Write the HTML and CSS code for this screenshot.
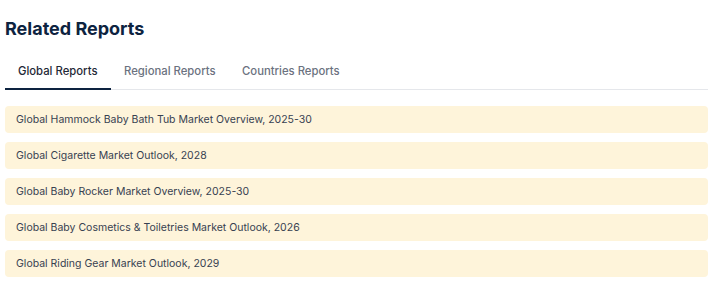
FILE: index.html
```html
<!DOCTYPE html>
<html lang="en">
<head>
    <meta charset="UTF-8">
    <meta name="viewport" content="width=device-width, initial-scale=1.0">
    <title>Related Reports</title>
    <link rel="stylesheet" href="styles.css">
</head>
<body>
    <div class="related">
        <h2 class="related-title">Related Reports</h2>
        <div class="tabs">
            <div class="tab active">Global Reports</div>
            <div class="tab">Regional Reports</div>
            <div class="tab">Countries Reports</div>
        </div>
        <ul class="report-list">
            <li class="report-item">Global Hammock Baby Bath Tub Market Overview, 2025-30</li>
            <li class="report-item">Global Cigarette Market Outlook, 2028</li>
            <li class="report-item">Global Baby Rocker Market Overview, 2025-30</li>
            <li class="report-item">Global Baby Cosmetics &amp; Toiletries Market Outlook, 2026</li>
            <li class="report-item">Global Riding Gear Market Outlook, 2029</li>
        </ul>
    </div>
</body>
</html>
```

FILE: styles.css
```css
body {
    font-family: Inter, "Noto Sans", sans-serif;
    background-color: #ffffff;
    margin: 0;
    padding: 0;
}

.related {
    padding: 15px 10px 0 5px;
}

.related-title {
    margin: 0;
    font-size: 18px;
    font-weight: 700;
    line-height: 28px;
    color: #0d2340;
}

.tabs {
    display: flex;
    margin-top: 20px;
    border-bottom: 1px solid #e5e7eb;
}

.tab {
    padding: 0 13.5px 9px 13px;
    font-size: 11.3px;
    font-weight: 500;
    line-height: 16px;
    color: #6b7280;
    border-bottom: 2px solid transparent;
    margin-bottom: -1px;
}

.tab.active {
    color: #1f2937;
    border-bottom-color: #0d2340;
}

.report-list {
    list-style: none;
    margin: 16px 0 0 0;
    padding: 0;
    display: flex;
    flex-direction: column;
    gap: 9px;
}

.report-item {
    background-color: #fef4da;
    border-radius: 4px;
    padding: 0 11px;
    height: 27px;
    line-height: 27px;
    font-size: 10.5px;
    color: #374151;
}
```
